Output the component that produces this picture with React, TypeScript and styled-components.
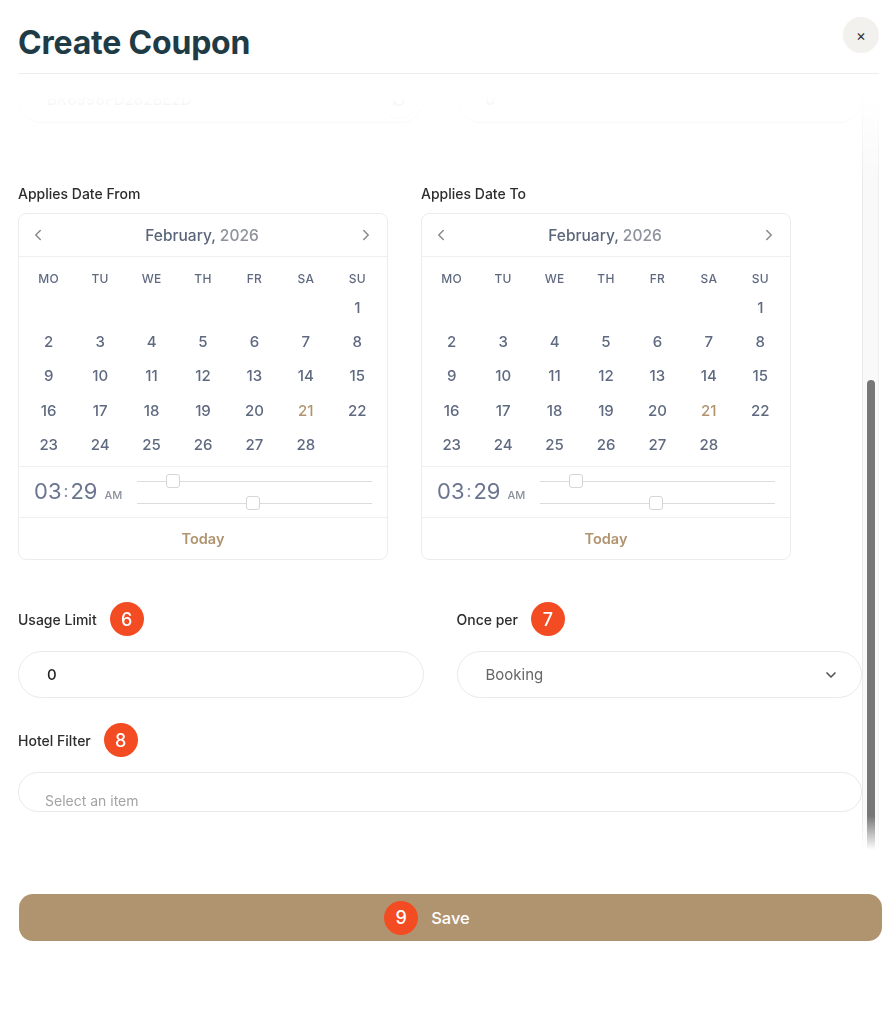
import React, { useLayoutEffect, useRef, useState } from "react";
import styled, { createGlobalStyle } from "styled-components";
import { ChevronLeft, ChevronRight, ChevronDown, RefreshCw } from "lucide-react";

const GlobalStyle = createGlobalStyle`
  html, body {
    margin: 0;
    padding: 0;
    background: #fff;
  }
  body {
    font-family: Inter, "Noto Sans", "Liberation Sans", sans-serif;
    color: #2b2b2b;
    -webkit-font-smoothing: antialiased;
  }
  * { box-sizing: border-box; }
`;

const Modal = styled.div`
  width: 896px;
  height: 1024px;
  display: flex;
  flex-direction: column;
  background: #fff;
`;

const Header = styled.header`
  display: flex;
  align-items: flex-start;
  justify-content: space-between;
  margin: 0 17px 0 18px;
  padding: 23px 0 11px;
  border-bottom: 1px solid #ededed;
`;

const Title = styled.h1`
  margin: 0;
  font-size: 32px;
  line-height: 39px;
  font-weight: 700;
  color: #1f3b46;
  letter-spacing: -0.2px;
`;

const CloseButton = styled.button`
  width: 36px;
  height: 36px;
  margin-top: -6px;
  border: none;
  border-radius: 50%;
  background: #f3f1ee;
  color: #333;
  font-size: 15px;
  line-height: 1;
  font-family: inherit;
  display: flex;
  align-items: center;
  justify-content: center;
  padding: 0;
`;

/* scroll area: viewport + drawn scrollbar, faded at both ends */

const ScrollArea = styled.div`
  height: 776px;
  width: 861px;
  margin-left: 18px;
  display: flex;
  -webkit-mask-image: linear-gradient(
    to bottom,
    transparent 0,
    transparent 22px,
    #000 112px,
    #000 calc(100% - 34px),
    transparent 100%
  );
  mask-image: linear-gradient(
    to bottom,
    transparent 0,
    transparent 22px,
    #000 112px,
    #000 calc(100% - 34px),
    transparent 100%
  );
`;

const Viewport = styled.div`
  flex: 1;
  min-width: 0;
  height: 100%;
  overflow: hidden;
`;

const ScrollTrack = styled.div`
  width: 17px;
  height: 100%;
  flex-shrink: 0;
  background: #f9f9f9;
  border-left: 1px solid #e9e9e9;
  border-right: 1px solid #efefef;
`;

const ScrollThumb = styled.div`
  width: 8px;
  margin-left: 4px;
  border-radius: 4px;
  background: #777;
`;

const Form = styled.div`
  display: flex;
  flex-direction: column;
  gap: 25px;
  padding-bottom: 38px;
`;

const Pair = styled.div<{ $mt?: number }>`
  display: grid;
  grid-template-columns: 1fr 1fr;
  column-gap: 33px;
  margin-top: ${(p) => p.$mt ?? 0}px;
`;

const Field = styled.div`
  display: flex;
  flex-direction: column;
  gap: 15px;
  min-width: 0;
`;

const LabelRow = styled.div`
  display: flex;
  align-items: center;
  gap: 13px;
  height: 34px;
`;

const Label = styled.span`
  font-size: 14px;
  font-weight: 500;
  color: #2d2d2d;
`;

const Badge = styled.span`
  width: 34px;
  height: 34px;
  border-radius: 50%;
  background: #f34c23;
  color: #fff;
  font-size: 18px;
  font-weight: 500;
  display: flex;
  align-items: center;
  justify-content: center;
  flex-shrink: 0;
`;

const TextInput = styled.input<{ $muted?: boolean }>`
  height: 47px;
  width: 100%;
  border: 1px solid #e9e9e9;
  border-radius: 24px;
  padding: 0 28px;
  font: inherit;
  font-size: 15px;
  font-weight: 500;
  color: ${(p) => (p.$muted ? "#9a9a9a" : "#222")};
  background: #fff;
  outline: none;
`;

const InputWrap = styled.div`
  position: relative;
  display: flex;
  align-items: center;
`;

const IconButton = styled.span`
  position: absolute;
  right: 6px;
  width: 38px;
  height: 38px;
  border-radius: 50%;
  border: 1px solid #eee;
  display: flex;
  align-items: center;
  justify-content: center;
  color: #888;
`;

const TextArea = styled.div`
  height: 142px;
  border: 1px solid #e9e9e9;
  border-radius: 20px;
  padding: 14px 28px;
  font-size: 15px;
  color: #9a9a9a;
`;

const Select = styled.div`
  height: 47px;
  border: 1px solid #e9e9e9;
  border-radius: 24px;
  padding: 0 22px 0 28px;
  display: flex;
  align-items: center;
  justify-content: space-between;
  font-size: 15px;
  color: #666;
`;

const MultiSelect = styled.div`
  height: 40px;
  border: 1px solid #e9e9e9;
  border-radius: 22px;
  padding: 0 26px;
`;

const MultiSelectInner = styled.div`
  height: 34px;
  overflow: hidden;
  padding-top: 19px;
  font-size: 14px;
  line-height: 18px;
  color: #a3a3a3;
`;

/* date pickers */

const DateRow = styled.div`
  display: flex;
  gap: 33px;
  margin-top: 37px;
`;

const DateField = styled.div`
  display: flex;
  flex-direction: column;
  gap: 10px;
  width: 370px;
`;

const DateLabel = styled.span`
  font-size: 14px;
  line-height: 18px;
  font-weight: 500;
  color: #2d2d2d;
`;

const Calendar = styled.div`
  width: 370px;
  border: 1px solid #ececec;
  border-radius: 8px;
  background: #fff;
`;

const CalHeader = styled.div`
  height: 43px;
  display: flex;
  align-items: center;
  justify-content: space-between;
  padding: 0 12px 0 10px;
  border-bottom: 1px solid #efefef;
  color: #8a8a8a;
`;

const MonthTitle = styled.span`
  font-size: 15.5px;
  font-weight: 500;
  color: #5b6579;
`;

const Year = styled.span`
  color: #8d929c;
`;

const DaysGrid = styled.div`
  display: grid;
  grid-template-columns: repeat(7, 1fr);
  grid-template-rows: 24px;
  grid-auto-rows: 34.4px;
  padding: 9px 4px 4px;
  height: 209px;
`;

const DayName = styled.span`
  display: flex;
  align-items: center;
  justify-content: center;
  font-size: 12px;
  font-weight: 500;
  color: #5f6a80;
  letter-spacing: 0.3px;
`;

const DayCell = styled.span<{ $today?: boolean }>`
  display: flex;
  align-items: center;
  justify-content: center;
  font-size: 15px;
  font-weight: 500;
  color: ${(p) => (p.$today ? "#b09470" : "#5f6a80")};
`;

const TimeRow = styled.div`
  height: 51px;
  border-top: 1px solid #efefef;
  display: flex;
  align-items: center;
  padding: 0 15px 0 15px;
`;

const Clock = styled.span`
  display: flex;
  align-items: baseline;
  font-size: 22px;
  font-weight: 400;
  color: #6b7590;
  margin-top: -3px;
`;

const Colon = styled.span`
  font-size: 17px;
  margin: 0 2px;
  position: relative;
  top: -2px;
  color: #8590a8;
`;

const Meridiem = styled.span`
  font-size: 11px;
  font-weight: 500;
  color: #8a8f99;
  margin-left: 7px;
`;

const Sliders = styled.div`
  margin-left: auto;
  width: 235px;
  display: flex;
  flex-direction: column;
`;

const Slider = styled.div`
  position: relative;
  height: 22px;

  &::before {
    content: "";
    position: absolute;
    left: 0;
    right: 0;
    top: 50%;
    height: 1px;
    background: #dcdcdc;
  }
`;

const Thumb = styled.span`
  position: absolute;
  top: 50%;
  width: 14px;
  height: 14px;
  margin-top: -7px;
  border: 1px solid #d6d6d6;
  border-radius: 3px;
  background: #fff;
`;

const TodayRow = styled.div`
  height: 42px;
  border-top: 1px solid #efefef;
  display: flex;
  align-items: center;
  justify-content: center;
  font-size: 14.5px;
  font-weight: 600;
  color: #b09470;
`;

/* footer */

const Footer = styled.div`
  padding: 44px 14px 0 19px;
`;

const SaveButton = styled.button`
  width: 100%;
  height: 47px;
  border: none;
  border-radius: 14px;
  background: #b09470;
  color: #fff;
  font-family: inherit;
  font-size: 16.5px;
  font-weight: 500;
  display: flex;
  align-items: center;
  justify-content: center;
`;

const SaveLabel = styled.span`
  position: relative;
  display: inline-flex;
  align-items: center;
`;

const SaveBadge = styled(Badge)`
  position: absolute;
  right: calc(100% + 13px);
  top: 50%;
  transform: translateY(-50%);
`;

const DAY_NAMES = ["MO", "TU", "WE", "TH", "FR", "SA", "SU"];
const LEAD_BLANKS = 6;
const DAYS_IN_MONTH = 28;
const TODAY = 21;
const TRACK = 235 - 14;

const TimeSlider: React.FC<{ value: number; max: number }> = ({ value, max }) => (
  <Slider>
    <Thumb style={{ left: `${(value / max) * TRACK}px` }} />
  </Slider>
);

const DatePicker: React.FC<{ label: string }> = ({ label }) => (
  <DateField>
    <DateLabel>{label}</DateLabel>
    <Calendar>
      <CalHeader>
        <ChevronLeft size={18} strokeWidth={2} />
        <MonthTitle>
          February, <Year>2026</Year>
        </MonthTitle>
        <ChevronRight size={18} strokeWidth={2} />
      </CalHeader>
      <DaysGrid>
        {DAY_NAMES.map((d) => (
          <DayName key={d}>{d}</DayName>
        ))}
        {Array.from({ length: LEAD_BLANKS }).map((_, i) => (
          <span key={`b${i}`} />
        ))}
        {Array.from({ length: DAYS_IN_MONTH }).map((_, i) => (
          <DayCell key={i} $today={i + 1 === TODAY}>
            {i + 1}
          </DayCell>
        ))}
      </DaysGrid>
      <TimeRow>
        <Clock>
          03<Colon>:</Colon>29<Meridiem>AM</Meridiem>
        </Clock>
        <Sliders>
          <TimeSlider value={3} max={23} />
          <TimeSlider value={29} max={59} />
        </Sliders>
      </TimeRow>
      <TodayRow>Today</TodayRow>
    </Calendar>
  </DateField>
);

const FieldLabel: React.FC<{ text: string; badge?: number }> = ({ text, badge }) => (
  <LabelRow>
    <Label>{text}</Label>
    {badge !== undefined && <Badge>{badge}</Badge>}
  </LabelRow>
);

export default function App() {
  const viewportRef = useRef<HTMLDivElement>(null);
  const [thumb, setThumb] = useState({ top: 305, height: 471 });

  // scroll the form to its end and size the thumb from the real content height
  useLayoutEffect(() => {
    const el = viewportRef.current;
    if (!el) return;
    const max = el.scrollHeight - el.clientHeight;
    el.scrollTop = max;
    const ratio = el.clientHeight / el.scrollHeight;
    setThumb({ top: max * ratio, height: el.clientHeight * ratio });
  }, []);

  return (
    <>
      <GlobalStyle />
      <Modal>
        <Header>
          <Title>Create Coupon</Title>
          <CloseButton aria-label="Close">×</CloseButton>
        </Header>

        <ScrollArea>
          <Viewport ref={viewportRef}>
            <Form>
              <Field>
                <FieldLabel text="Coupon Name" badge={1} />
                <TextInput readOnly value="Spring Promo" />
              </Field>

              <Pair>
                <Field>
                  <FieldLabel text="Discount Type" badge={2} />
                  <Select>
                    Percentage
                    <ChevronDown size={16} strokeWidth={2.5} color="#555" />
                  </Select>
                </Field>
                <Field>
                  <FieldLabel text="Discount Value" badge={3} />
                  <TextInput readOnly value="10" />
                </Field>
              </Pair>

              <Field>
                <FieldLabel text="Description" badge={4} />
                <TextArea>Write a description</TextArea>
              </Field>

              <Pair>
                <Field>
                  <FieldLabel text="Coupon Code" badge={5} />
                  <InputWrap>
                    <TextInput readOnly $muted value="BK6998FD282BE2D" />
                    <IconButton>
                      <RefreshCw size={14} />
                    </IconButton>
                  </InputWrap>
                </Field>
                <Field>
                  <FieldLabel text="Minimum Amount" />
                  <TextInput readOnly $muted value="0" />
                </Field>
              </Pair>

              <DateRow>
                <DatePicker label="Applies Date From" />
                <DatePicker label="Applies Date To" />
              </DateRow>

              <Pair $mt={17}>
                <Field>
                  <FieldLabel text="Usage Limit" badge={6} />
                  <TextInput readOnly value="0" />
                </Field>
                <Field>
                  <FieldLabel text="Once per" badge={7} />
                  <Select>
                    Booking
                    <ChevronDown size={16} strokeWidth={2.5} color="#555" />
                  </Select>
                </Field>
              </Pair>

              <Field>
                <FieldLabel text="Hotel Filter" badge={8} />
                <MultiSelect>
                  <MultiSelectInner>Select an item</MultiSelectInner>
                </MultiSelect>
              </Field>
            </Form>
          </Viewport>
          <ScrollTrack>
            <ScrollThumb style={{ marginTop: thumb.top, height: thumb.height }} />
          </ScrollTrack>
        </ScrollArea>

        <Footer>
          <SaveButton>
            <SaveLabel>
              <SaveBadge>9</SaveBadge>
              Save
            </SaveLabel>
          </SaveButton>
        </Footer>
      </Modal>
    </>
  );
}
